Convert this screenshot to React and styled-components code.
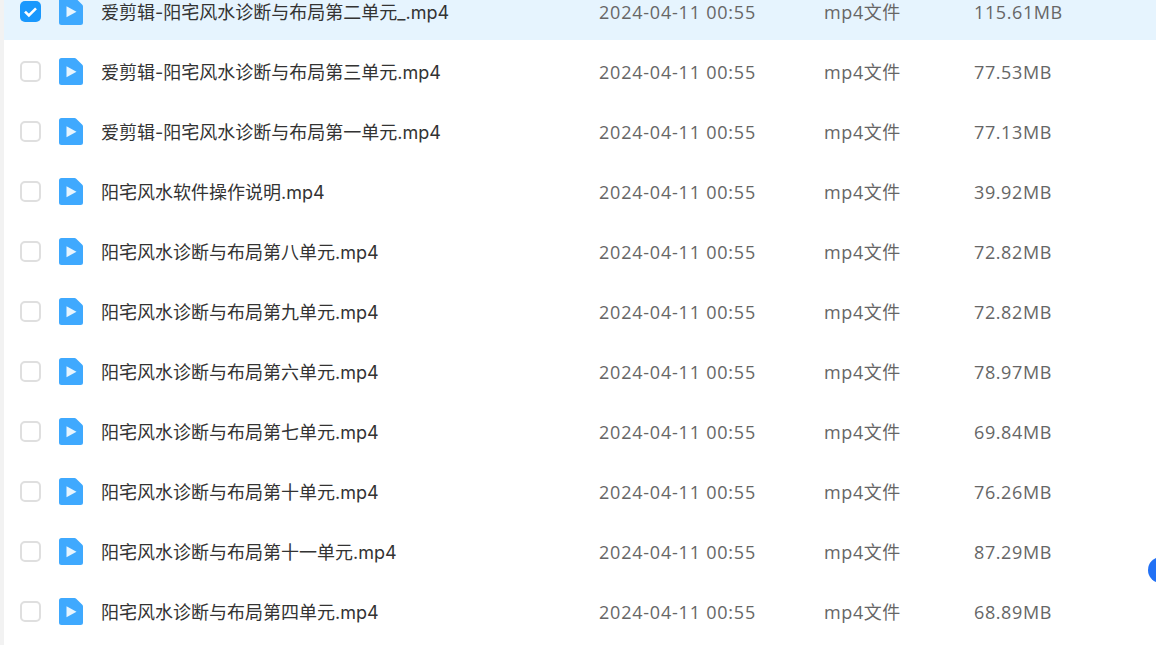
import React from 'react';
import styled, { createGlobalStyle } from 'styled-components';

const GlobalStyle = createGlobalStyle`
  html, body {
    margin: 0;
    height: 100%;
    background: #fff;
    overflow: hidden;
  }
`;

const Page = styled.div`
  position: relative;
  width: 1156px;
  height: 645px;
  overflow: hidden;
  padding-left: 4px;
  box-sizing: border-box;
  background: #f2f2f2;
  font-family: Inter, "Noto Sans CJK SC", sans-serif;
`;

const List = styled.div`
  margin-top: -20px;
  background: #fff;
  height: 665px;
`;

const Row = styled.div`
  display: grid;
  grid-template-columns: 55px 42px 498px 225px 150px 1fr;
  align-items: center;
  height: 60px;
  box-sizing: border-box;
  padding-top: 3px;
  background: ${(p) => (p.$selected ? '#e6f4fe' : '#fff')};
`;

const CheckCell = styled.div`
  display: flex;
  padding-left: 16px;
`;

const Box = styled.div`
  display: flex;
  align-items: center;
  justify-content: center;
  width: 21px;
  height: 21px;
  box-sizing: border-box;
  border-radius: 5px;
  border: ${(p) => (p.$checked ? '0' : '2px solid #dfdfdf')};
  background: ${(p) => (p.$checked ? '#1a98fd' : '#fff')};
`;

const Name = styled.div`
  font-size: 18px;
  line-height: 24px;
  padding-top: 2px;
  color: #333;
  white-space: nowrap;
`;

const Meta = styled.div`
  font-family: "Open Sans", "Noto Sans CJK SC", sans-serif;
  font-size: 18px;
  line-height: 24px;
  letter-spacing: ${(p) => (p.$date ? '0.78px' : '0.6px')};
  color: #666;
  white-space: nowrap;
`;

const ScrollDot = styled.div`
  position: absolute;
  left: 1148px;
  top: 557px;
  width: 26px;
  height: 26px;
  border-radius: 50%;
  background: #2271f5;
`;

const Icon = styled.svg`
  display: block;
`;

const Tick = () => (
  <svg width="21" height="21" viewBox="0 0 21 21">
    <path d="M5 10.6l3.9 3.9L16 7.4" fill="none" stroke="#fff" strokeWidth="2.6" />
  </svg>
);

const VideoIcon = () => (
  <Icon width="24" height="27" viewBox="0 0 24 27">
    <path
      d="M2.5 0H15.5Q16.5 0 17.2 .7L23.3 6.8Q24 7.5 24 8.5V24.5a2.5 2.5 0 0 1-2.5 2.5H2.5A2.5 2.5 0 0 1 0 24.5V2.5A2.5 2.5 0 0 1 2.5 0Z"
      fill="#3fa9fe"
    />
    <path d="M7.5 8.2L17.5 13.7L7.5 19.2Z" fill="#e8f5ff" />
  </Icon>
);

const files = [
  { name: '爱剪辑-阳宅风水诊断与布局第二单元_.mp4', size: '115.61MB', selected: true },
  { name: '爱剪辑-阳宅风水诊断与布局第三单元.mp4', size: '77.53MB' },
  { name: '爱剪辑-阳宅风水诊断与布局第一单元.mp4', size: '77.13MB' },
  { name: '阳宅风水软件操作说明.mp4', size: '39.92MB' },
  { name: '阳宅风水诊断与布局第八单元.mp4', size: '72.82MB' },
  { name: '阳宅风水诊断与布局第九单元.mp4', size: '72.82MB' },
  { name: '阳宅风水诊断与布局第六单元.mp4', size: '78.97MB' },
  { name: '阳宅风水诊断与布局第七单元.mp4', size: '69.84MB' },
  { name: '阳宅风水诊断与布局第十单元.mp4', size: '76.26MB' },
  { name: '阳宅风水诊断与布局第十一单元.mp4', size: '87.29MB' },
  { name: '阳宅风水诊断与布局第四单元.mp4', size: '68.89MB' },
];

function App() {
  return (
    <Page>
      <GlobalStyle />
      <List>
        {files.map((file) => (
          <Row key={file.name} $selected={file.selected}>
            <CheckCell>
              <Box $checked={file.selected}>{file.selected && <Tick />}</Box>
            </CheckCell>
            <VideoIcon />
            <Name>{file.name}</Name>
            <Meta $date>2024-04-11 00:55</Meta>
            <Meta>mp4文件</Meta>
            <Meta>{file.size}</Meta>
          </Row>
        ))}
      </List>
      <ScrollDot />
    </Page>
  );
}

export default App;
